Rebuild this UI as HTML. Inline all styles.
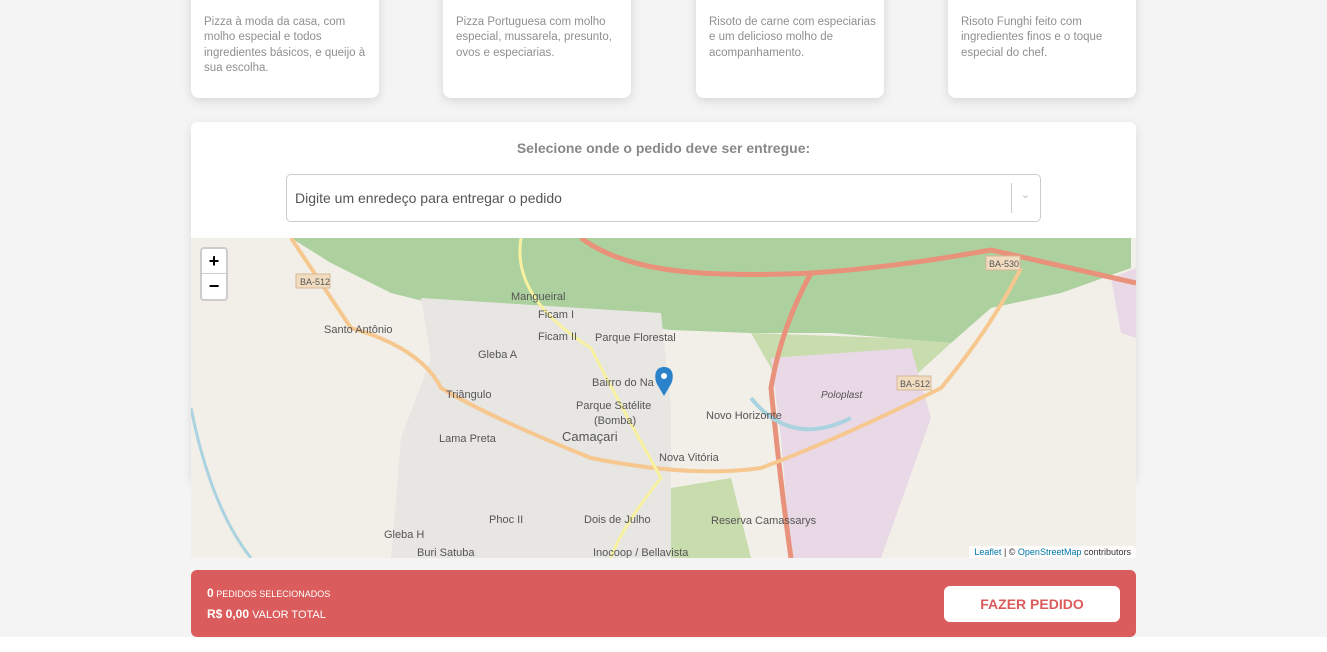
<!DOCTYPE html>
<html><head><meta charset="utf-8"><style>
body{margin:0;width:1327px;height:652px;background:#fff;font-family:"Liberation Sans",sans-serif;overflow:hidden;position:relative}
.bg{position:absolute;left:0;top:0;width:1327px;height:637px;background:#f4f4f4}
.card{position:absolute;top:-20px;width:188px;height:118px;background:#fff;border-radius:8px;box-shadow:0 3px 10px rgba(0,0,0,.12)}
.card p{margin:0;position:absolute;left:13px;top:35px;width:172px;font-size:11.5px;line-height:15.3px;color:#8f8f8f}
.sel{position:absolute;left:191px;top:122px;width:945px;height:360px;background:#fff;border-radius:6px;box-shadow:0 3px 10px rgba(0,0,0,.1)}
.sel h3{margin:0;position:absolute;top:18px;width:100%;text-align:center;font-size:14px;color:#888;font-weight:bold}
.inp{position:absolute;left:95px;top:52px;width:753px;height:46px;border:1px solid #ccc;border-radius:5px;font-size:14px;color:#555}
.inp span{position:absolute;left:8px;top:15px}
.inp i{position:absolute;right:28px;top:8px;height:30px;border-left:1px solid #ccc}
.inp b{position:absolute;right:10px;top:13px;color:#bbb;font-weight:normal;font-size:11px}
.map{position:absolute;left:191px;top:238px;width:945px;height:320px;background:#f2efe9;overflow:hidden}
.zoom{position:absolute;left:9px;top:9px;width:24px;height:50px;background:#fff;border:2px solid rgba(0,0,0,.2);border-radius:4px;font-size:18px;font-weight:bold;text-align:center;line-height:24px}
.attr{position:absolute;right:0;bottom:0;background:rgba(255,255,255,.8);font-size:9px;padding:1px 5px;color:#333}
.attr a{color:#0078a8}
.bar{position:absolute;left:191px;top:570px;width:945px;height:67px;background:#db5c5c;border-radius:6px;color:#fff}
.btn{position:absolute;left:753px;top:16px;width:176px;height:36px;background:#fff;border-radius:6px;color:#db5c5c;font-weight:bold;font-size:14px;text-align:center;line-height:36px}
</style></head><body>
<div class="bg"></div>
<div class="card" style="left:191px"><p>Pizza à moda da casa, com molho especial e todos ingredientes básicos, e queijo à sua escolha.</p></div>
<div class="card" style="left:443px"><p>Pizza Portuguesa com molho especial, mussarela, presunto, ovos e especiarias.</p></div>
<div class="card" style="left:696px"><p>Risoto de carne com especiarias e um delicioso molho de acompanhamento.</p></div>
<div class="card" style="left:948px"><p>Risoto Funghi feito com ingredientes finos e o toque especial do chef.</p></div>
<div class="sel"><h3>Selecione onde o pedido deve ser entregue:</h3>
<div class="inp"><span>Digite um enredeço para entregar o pedido</span><i></i><b>&#8964;</b></div></div>
<div class="map">
<svg width="945" height="320" style="position:absolute;left:0;top:0">
<polygon points="100,0 940,0 940,30 870,55 800,70 760,105 700,100 640,95 560,95 480,92 400,82 330,78 260,70 200,55 140,25" fill="#add19e"/>
<polygon points="560,95 700,100 760,105 700,160 600,170 580,130" fill="#c8dcae"/>
<polygon points="230,60 470,75 480,170 480,320 200,320 210,200 240,120" fill="#e8e6e3"/>
<polygon points="580,120 720,110 740,180 690,320 600,320 590,200" fill="#e9d8e6"/>
<polygon points="920,40 945,30 945,100 930,95" fill="#e9d8e6"/>
<polygon points="480,250 540,240 560,320 480,320" fill="#c8dcae"/>
<path d="M390,0 Q430,30 510,35 Q560,38 620,35 Q700,30 800,12 L945,45" stroke="#e8927c" stroke-width="5" fill="none"/>
<path d="M620,35 Q590,90 580,150 Q590,250 600,320" stroke="#e8927c" stroke-width="5" fill="none"/>
<path d="M100,0 Q140,60 160,90 Q230,110 250,150 Q300,180 400,220 Q500,240 570,230 Q650,200 750,150 Q800,90 830,30" stroke="#f6c78f" stroke-width="4" fill="none"/>
<path d="M330,0 Q320,60 400,110 Q420,150 470,240 Q430,290 420,320" stroke="#f7f1a0" stroke-width="3" fill="none"/>
<path d="M0,170 Q20,270 60,320" stroke="#aad3df" stroke-width="3" fill="none"/>
<path d="M560,160 Q600,210 660,180" stroke="#aad3df" stroke-width="4" fill="none"/>
<g font-size="11" fill="#555" font-family="Liberation Sans">
<text x="133" y="95">Santo Antônio</text><text x="320" y="62">Mangueiral</text><text x="347" y="80">Ficam I</text><text x="347" y="102">Ficam II</text><text x="404" y="103">Parque Florestal</text><text x="287" y="120">Gleba A</text><text x="401" y="148">Bairro do Na</text><text x="255" y="160">Triângulo</text><text x="385" y="171">Parque Satélite</text><text x="403" y="186">(Bomba)</text><text x="515" y="181">Novo Horizonte</text><text x="248" y="204">Lama Preta</text><text x="371" y="203" font-size="13">Camaçari</text><text x="468" y="223">Nova Vitória</text><text x="298" y="285">Phoc II</text><text x="393" y="285">Dois de Julho</text><text x="520" y="286">Reserva Camassarys</text><text x="193" y="300">Gleba H</text><text x="226" y="318">Buri Satuba</text><text x="402" y="318">Inocoop / Bellavista</text><text x="630" y="160" font-style="italic" font-size="10">Poloplast</text>
</g>
<rect x="105" y="36" width="34" height="14" fill="#f1dcc0" stroke="#d7b89a"/><text x="109" y="47" font-size="9" fill="#555">BA-512</text>
<rect x="795" y="18" width="34" height="14" fill="#f1dcc0" stroke="#d7b89a"/><text x="798" y="29" font-size="9" fill="#555">BA-530</text>
<rect x="706" y="138" width="34" height="14" fill="#f1dcc0" stroke="#d7b89a"/><text x="709" y="149" font-size="9" fill="#555">BA-512</text>
<path d="M473,129 C463,129 463,140 466,146 L473,158 L480,146 C483,140 483,129 473,129Z" fill="#2a82cb"/><circle cx="473" cy="138" r="3" fill="#fff"/>
</svg>
<div class="zoom">+<br><span style="border-top:1px solid #ccc;display:block">−</span></div>
<div class="attr"><a>Leaflet</a> | © <a>OpenStreetMap</a> contributors</div>
</div>
<div class="bar">
<div style="position:absolute;left:16px;top:16px;font-size:9px"><b style="font-size:12px">0</b> PEDIDOS SELECIONADOS</div>
<div style="position:absolute;left:16px;top:37px;font-size:11px"><b style="font-size:12px">R$ 0,00</b> VALOR TOTAL</div>
<div class="btn">FAZER PEDIDO</div></div>
</body></html>
